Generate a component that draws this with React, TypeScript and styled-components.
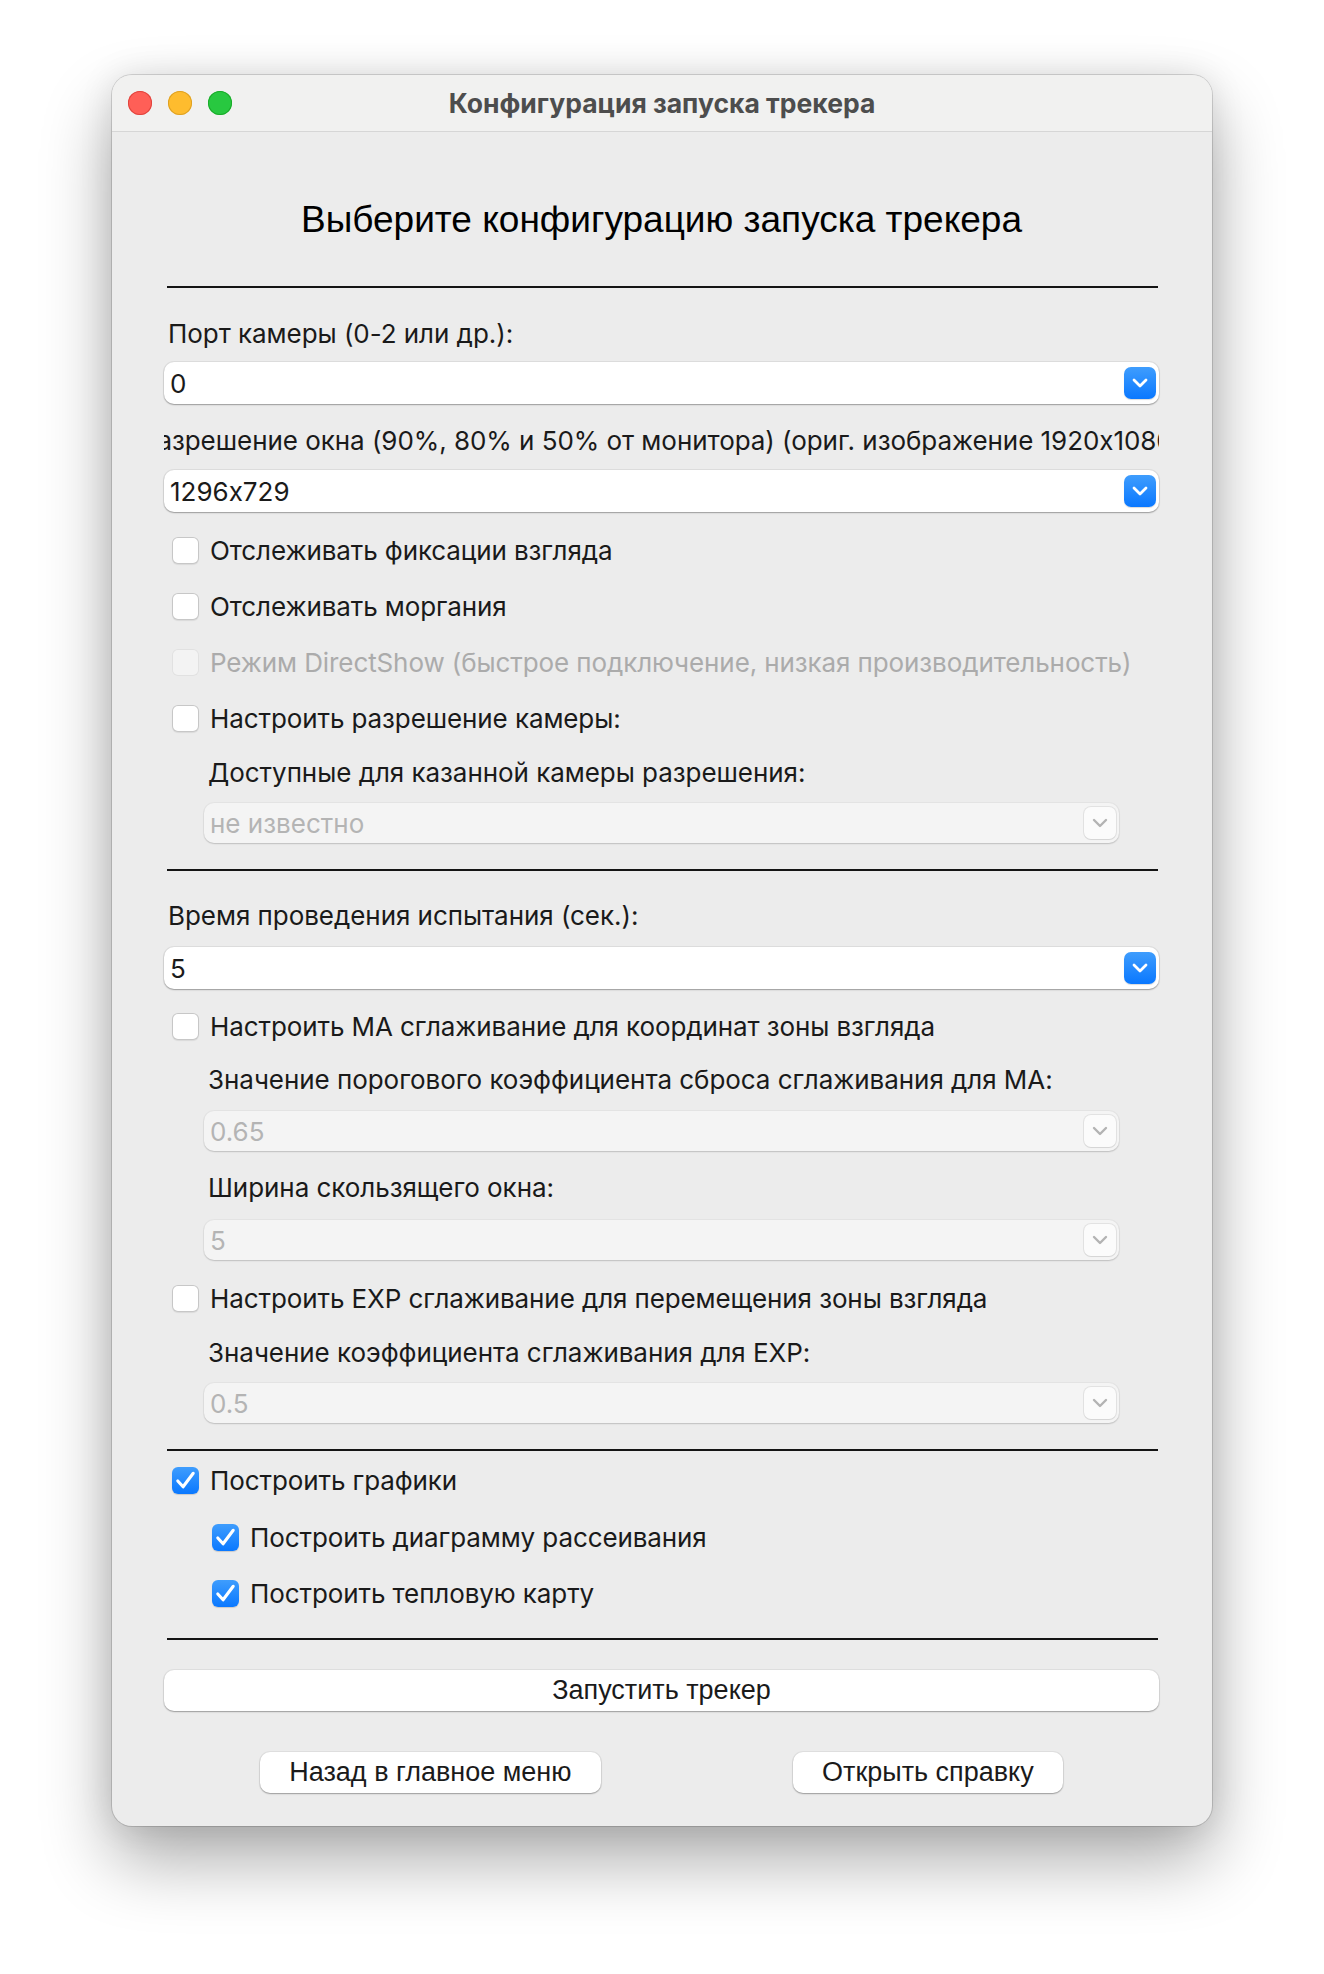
import React from "react";
import styled, { createGlobalStyle } from "styled-components";

const GlobalStyle = createGlobalStyle`
  html, body {
    margin: 0;
    padding: 0;
    background: #ffffff;
  }
  body {
    font-family: Inter, "Noto Sans", sans-serif;
    font-feature-settings: "calt" 0;
    -webkit-font-smoothing: antialiased;
  }
`;

const Page = styled.div`
  width: 1324px;
  min-height: 1974px;
  padding-top: 75px;
  box-sizing: border-box;
`;

const Window = styled.div`
  width: 1100px;
  margin: 0 auto;
  background: #ececec;
  border-radius: 20px;
  overflow: hidden;
  display: flex;
  flex-direction: column;
  box-shadow: 0 0 0 1px rgba(0, 0, 0, 0.14), 0 34px 70px rgba(0, 0, 0, 0.33),
    0 0 34px rgba(0, 0, 0, 0.1);
`;

const TitleBar = styled.div`
  height: 56px;
  flex: none;
  display: grid;
  grid-template-columns: 1fr auto 1fr;
  align-items: center;
  padding: 0 16px;
  background: #f1f1f0;
  border-bottom: 1px solid #d6d6d6;
`;

const Lights = styled.div`
  display: flex;
  gap: 16px;
`;

const Light = styled.span<{ $fill: string; $edge: string }>`
  width: 24px;
  height: 24px;
  border-radius: 50%;
  background: ${({ $fill }) => $fill};
  box-shadow: inset 0 0 0 1px ${({ $edge }) => $edge};
`;

const WindowTitle = styled.div`
  font-size: 26.5px;
  font-weight: 700;
  color: #4d4d4d;
`;

const Content = styled.div`
  display: flex;
  flex-direction: column;
  padding: 0 53px 33px 52px;
`;

const Heading = styled.h1`
  margin: 66px 0 0;
  height: 44px;
  line-height: 44px;
  font-family: "Liberation Sans", Arial, sans-serif;
  font-size: 37px;
  font-weight: 400;
  text-align: center;
  color: #000;
`;

const Rule = styled.div<{ $mt?: number }>`
  height: 2px;
  margin: ${({ $mt = 26 }) => $mt}px 1px 0 3px;
  background: #141414;
`;

const Label = styled.div<{ $mt?: number; $clip?: boolean }>`
  height: 32px;
  line-height: 32px;
  margin-top: ${({ $mt = 22 }) => $mt}px;
  padding-left: ${({ $clip }) => ($clip ? 0 : 4)}px;
  display: flex;
  justify-content: ${({ $clip }) => ($clip ? "center" : "flex-start")};
  overflow: hidden;
  white-space: nowrap;
  font-size: 26px;
  letter-spacing: -0.05px;
  color: #1a1a1a;
`;

const Combo = styled.div<{ $mt?: number; $disabled?: boolean }>`
  height: ${({ $disabled }) => ($disabled ? 40 : 42)}px;
  margin-top: ${({ $mt = 14 }) => $mt}px;
  box-sizing: border-box;
  display: flex;
  align-items: center;
  padding: 0 3px 0 6px;
  border-radius: 10px;
  background: ${({ $disabled }) => ($disabled ? "#f4f4f4" : "#ffffff")};
  box-shadow: 0 0 0 1px rgba(0, 0, 0, ${({ $disabled }) => ($disabled ? 0.03 : 0.06)}),
    0 1px 1.5px rgba(0, 0, 0, ${({ $disabled }) => ($disabled ? 0.16 : 0.3)});
  font-size: 26px;
  color: ${({ $disabled }) => ($disabled ? "#b4b4b4" : "#1a1a1a")};
`;

const ComboValue = styled.span`
  flex: 1;
  white-space: nowrap;
`;

const ArrowButton = styled.span<{ $disabled?: boolean }>`
  width: 32px;
  height: 32px;
  flex: none;
  display: flex;
  align-items: center;
  justify-content: center;
  border-radius: 7px;
  background: ${({ $disabled }) =>
    $disabled ? "#fbfbfb" : "linear-gradient(180deg, #3f9dfd 0%, #0a78ff 100%)"};
  box-shadow: ${({ $disabled }) =>
    $disabled
      ? "0 0 0 1px rgba(0,0,0,0.07), 0 1px 1px rgba(0,0,0,0.06)"
      : "0 1px 1px rgba(0,0,0,0.15)"};
`;

const Indent = styled.div`
  display: flex;
  flex-direction: column;
  margin: 0 40px 0 40px;
`;

const CheckRow = styled.label<{ $mt?: number; $disabled?: boolean }>`
  height: 32px;
  margin-top: ${({ $mt = 24 }) => $mt}px;
  padding-left: 8px;
  display: flex;
  align-items: center;
  gap: 11px;
  white-space: nowrap;
  font-size: 26px;
  letter-spacing: -0.1px;
  color: ${({ $disabled }) => ($disabled ? "#ababab" : "#1a1a1a")};
`;

const Box = styled.span<{ $checked?: boolean; $disabled?: boolean }>`
  width: 27px;
  height: 27px;
  flex: none;
  display: flex;
  align-items: center;
  justify-content: center;
  border-radius: 6px;
  background: ${({ $checked, $disabled }) =>
    $checked
      ? "linear-gradient(180deg, #3f9dfd 0%, #0a78ff 100%)"
      : $disabled
      ? "#f3f3f3"
      : "#ffffff"};
  box-shadow: ${({ $checked, $disabled }) =>
    $checked
      ? "0 1px 1px rgba(0,0,0,0.15)"
      : $disabled
      ? "inset 0 0 0 1px rgba(0,0,0,0.07)"
      : "inset 0 0 0 1px rgba(0,0,0,0.22), 0 1px 1px rgba(0,0,0,0.08)"};
`;

const PushButton = styled.button<{ $wide?: boolean; $mt?: number }>`
  height: 41px;
  margin-top: ${({ $mt = 0 }) => $mt}px;
  padding: 0 29px;
  width: ${({ $wide }) => ($wide ? "100%" : "auto")};
  border: none;
  border-radius: 10px;
  background: #ffffff;
  box-shadow: 0 0 0 1px rgba(0, 0, 0, 0.05), 0 1px 1.5px rgba(0, 0, 0, 0.3);
  font-family: "Liberation Sans", Arial, sans-serif;
  font-size: 27px;
  color: #1a1a1a;
`;

const ButtonRow = styled.div`
  display: flex;
  justify-content: space-around;
  margin-top: 41px;
`;

const Chevron: React.FC<{ disabled?: boolean }> = ({ disabled }) => (
  <svg width="16" height="10" viewBox="0 0 16 10">
    <path
      d="M2 2 L8 8 L14 2"
      fill="none"
      stroke={disabled ? "#b3b3b3" : "#ffffff"}
      strokeWidth={disabled ? 2.4 : 2.8}
      strokeLinecap="round"
      strokeLinejoin="round"
    />
  </svg>
);

const Tick = () => (
  <svg width="27" height="27" viewBox="0 0 28 28">
    <path
      d="M6 14.5 L11.5 20.5 L22 6.5"
      fill="none"
      stroke="#ffffff"
      strokeWidth="3.2"
      strokeLinecap="round"
      strokeLinejoin="round"
    />
  </svg>
);

interface SelectProps {
  value: string;
  mt?: number;
  disabled?: boolean;
}

const Select: React.FC<SelectProps> = ({ value, mt, disabled }) => (
  <Combo $mt={mt} $disabled={disabled}>
    <ComboValue>{value}</ComboValue>
    <ArrowButton $disabled={disabled}>
      <Chevron disabled={disabled} />
    </ArrowButton>
  </Combo>
);

interface CheckProps {
  text: string;
  mt?: number;
  checked?: boolean;
  disabled?: boolean;
}

const Check: React.FC<CheckProps> = ({ text, mt, checked, disabled }) => (
  <CheckRow $mt={mt} $disabled={disabled}>
    <Box $checked={checked} $disabled={disabled}>
      {checked && <Tick />}
    </Box>
    {text}
  </CheckRow>
);

export default function App() {
  return (
    <Page>
      <GlobalStyle />
      <Window>
        <TitleBar>
          <Lights>
            <Light $fill="#ff5f57" $edge="#e0443e" />
            <Light $fill="#febc2e" $edge="#dea123" />
            <Light $fill="#28c840" $edge="#1aab29" />
          </Lights>
          <WindowTitle>Конфигурация запуска трекера</WindowTitle>
          <span />
        </TitleBar>
        <Content>
          <Heading>Выберите конфигурацию запуска трекера</Heading>
          <Rule $mt={44} />

          <Label $mt={30}>Порт камеры (0-2 или др.):</Label>
          <Select value="0" mt={12} />
          <Label $mt={21} $clip>
            Разрешение окна (90%, 80% и 50% от монитора) (ориг. изображение 1920x1080)
          </Label>
          <Select value="1296x729" mt={13} />
          <Check text="Отслеживать фиксации взгляда" mt={22} />
          <Check text="Отслеживать моргания" />
          <Check
            text="Режим DirectShow (быстрое подключение, низкая производительность)"
            disabled
          />
          <Check text="Настроить разрешение камеры:" />
          <Indent>
            <Label $mt={23}>Доступные для казанной камеры разрешения:</Label>
            <Select value="не известно" disabled />
          </Indent>
          <Rule />

          <Label $mt={29}>Время проведения испытания (сек.):</Label>
          <Select value="5" mt={15} />
          <Check text="Настроить MA сглаживание для координат зоны взгляда" mt={21} />
          <Indent>
            <Label>Значение порогового коэффициента сброса сглаживания для MA:</Label>
            <Select value="0.65" mt={15} disabled />
            <Label $mt={21}>Ширина скользящего окна:</Label>
            <Select value="5" mt={16} disabled />
          </Indent>
          <Check text="Настроить EXP сглаживание для перемещения зоны взгляда" mt={22} />
          <Indent>
            <Label $mt={23}>Значение коэффициента сглаживания для EXP:</Label>
            <Select value="0.5" disabled />
          </Indent>
          <Rule />

          <Check text="Построить графики" mt={13} checked />
          <Indent>
            <Check text="Построить диаграмму рассеивания" mt={25} checked />
            <Check text="Построить тепловую карту" checked />
          </Indent>
          <Rule $mt={29} />

          <PushButton $wide $mt={30}>
            Запустить трекер
          </PushButton>
          <ButtonRow>
            <PushButton>Назад в главное меню</PushButton>
            <PushButton>Открыть справку</PushButton>
          </ButtonRow>
        </Content>
      </Window>
    </Page>
  );
}
